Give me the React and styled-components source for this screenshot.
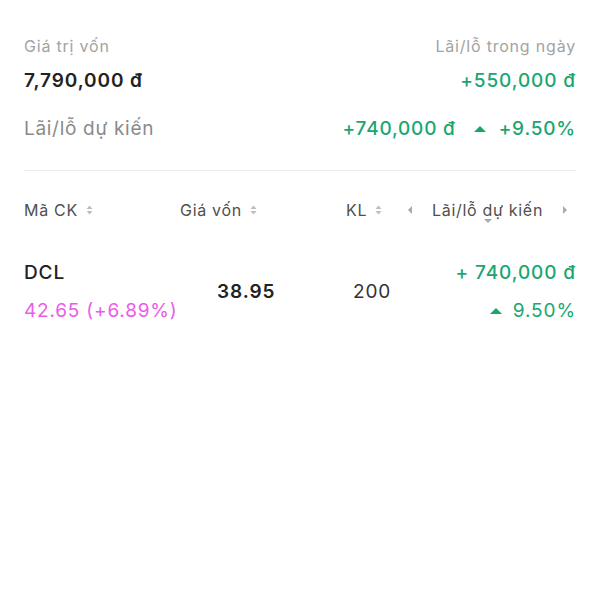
import React from "react";
import styled, { createGlobalStyle } from "styled-components";

const Global = createGlobalStyle`
  html, body { margin: 0; padding: 0; background: #fff; }
  body { font-family: Inter, "Noto Sans", sans-serif; -webkit-font-smoothing: antialiased; }
`;

const GREEN = "#1aa672";

const Page = styled.div`
  width: 600px;
  padding: 35px 24px 0;
  box-sizing: border-box;
`;

const Summary = styled.div`
  display: grid;
  grid-template-columns: 1fr auto;
`;

const Label = styled.div`
  font-size: 16px;
  line-height: 22px;
  letter-spacing: 0.8px;
  color: #a3a3a3;
  text-align: ${(p) => (p.$right ? "right" : "left")};
`;

const Value = styled.div`
  margin-top: 12px;
  font-size: 19px;
  line-height: 24px;
  letter-spacing: 0.9px;
  font-weight: ${(p) => (p.$bold ? 600 : 500)};
  color: ${(p) => p.$color || "#222"};
  text-align: ${(p) => (p.$right ? "right" : "left")};
`;

const ForecastLabel = styled.div`
  margin-top: 24px;
  font-size: 19px;
  line-height: 24px;
  letter-spacing: 0.7px;
  color: #8a8a8a;
`;

const ForecastValue = styled.div`
  margin-top: 24px;
  display: flex;
  align-items: center;
  justify-content: flex-end;
  font-size: 19px;
  line-height: 24px;
  letter-spacing: 0.8px;
  font-weight: 500;
  color: ${GREEN};
`;

const Up = styled.span`
  display: inline-block;
  width: 0;
  height: 0;
  margin: 0 ${(p) => p.$mr || 0}px 0 ${(p) => p.$ml || 0}px;
  border-left: 6.5px solid transparent;
  border-right: 6.5px solid transparent;
  border-bottom: 6px solid #18a566;
`;

const Divider = styled.hr`
  margin: 29px 0 0;
  border: 0;
  height: 1px;
  background: #ebebeb;
`;

const Table = styled.div`
  display: grid;
  grid-template-columns: 156px 166px 58px 1fr;
`;

const Head = styled.div`
  margin-top: 29px;
  display: flex;
  align-items: center;
  gap: 8px;
  font-size: 16px;
  line-height: 20px;
  letter-spacing: 0.7px;
  color: #4f4f4f;
  justify-content: ${(p) => p.$justify || "flex-start"};
  padding: ${(p) => p.$pad || "0"};
`;

const SortIcon = () => (
  <svg width="7" height="10" viewBox="0 0 7 10">
    <path d="M3.5 0.5 L6.5 4 H0.5 Z" fill="#bdbdbd" />
    <path d="M3.5 9.5 L6.5 6 H0.5 Z" fill="#bdbdbd" />
  </svg>
);

const Caret = styled.span`
  display: inline-block;
  width: 0;
  height: 0;
  border-top: 4px solid transparent;
  border-bottom: 4px solid transparent;
  ${(p) => (p.$dir === "left" ? "border-right: 4px solid #aaa;" : "border-left: 4px solid #aaa;")}
`;

const HeadTitle = styled.span`
  position: relative;
  &::after {
    content: "";
    position: absolute;
    left: 50%;
    bottom: -3px;
    transform: translateX(-50%);
    border-left: 4px solid transparent;
    border-right: 4px solid transparent;
    border-top: 4px solid #aaa;
  }
`;

const Cell = styled.div`
  margin-top: 41px;
  display: flex;
  flex-direction: column;
  justify-content: center;
  align-items: ${(p) => (p.$right ? "flex-end" : "flex-start")};
  padding-left: ${(p) => p.$pad || 0}px;
  gap: 14px;
`;

const Ticker = styled.div`
  font-size: 19px;
  line-height: 24px;
  letter-spacing: 0.9px;
  font-weight: 500;
  color: #222;
`;

const Price = styled.div`
  font-size: 19px;
  line-height: 24px;
  letter-spacing: 0.8px;
  color: #ea5ce9;
`;

const Num = styled.div`
  font-size: 19px;
  line-height: 24px;
  letter-spacing: 0.9px;
  font-weight: ${(p) => p.$w || 400};
  color: ${(p) => p.$color || "#222"};
  display: flex;
  align-items: center;
`;

export default function App() {
  return (
    <>
      <Global />
      <Page>
        <Summary>
          <Label>Giá trị vốn</Label>
          <Label $right>Lãi/lỗ trong ngày</Label>
          <Value $bold>7,790,000 đ</Value>
          <Value $right $color={GREEN}>+550,000 đ</Value>
          <ForecastLabel>Lãi/lỗ dự kiến</ForecastLabel>
          <ForecastValue>
            <span>+740,000 đ</span>
            <Up $ml={18} $mr={13} />
            <span>+9.50%</span>
          </ForecastValue>
        </Summary>
        <Divider />
        <Table>
          <Head>Mã CK <SortIcon /></Head>
          <Head>Giá vốn <SortIcon /></Head>
          <Head>KL <SortIcon /></Head>
          <Head $justify="space-between" $pad="0 9px 0 4px">
            <Caret $dir="left" />
            <HeadTitle>Lãi/lỗ dự kiến</HeadTitle>
            <Caret $dir="right" />
          </Head>
          <Cell>
            <Ticker>DCL</Ticker>
            <Price>42.65 (+6.89%)</Price>
          </Cell>
          <Cell $pad={37}>
            <Num $w={600}>38.95</Num>
          </Cell>
          <Cell $pad={7}>
            <Num $color="#333">200</Num>
          </Cell>
          <Cell $right>
            <Num $color={GREEN} $w={500}>+ 740,000 đ</Num>
            <Num $color={GREEN}><Up $mr={11} />9.50%</Num>
          </Cell>
        </Table>
      </Page>
    </>
  );
}
